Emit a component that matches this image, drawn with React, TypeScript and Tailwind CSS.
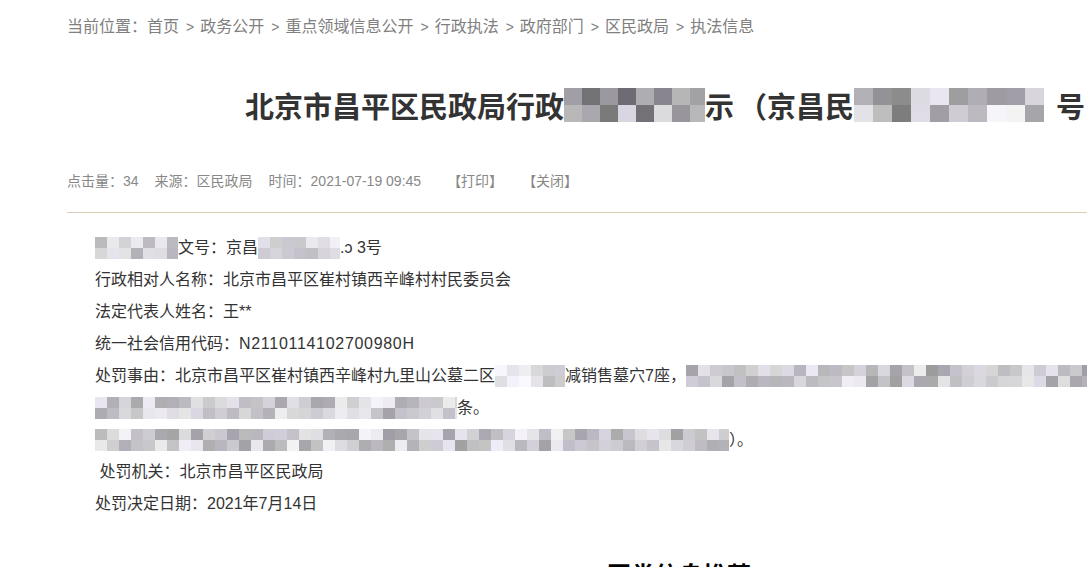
import React from 'react'

const makeRand = (seed: number) => {
  let s = seed
  return () => {
    s = (s * 9301 + 49297) % 233280
    return s / 233280
  }
}

type MosaicProps = {
  w: number
  cell?: number
  rows?: number
  rowH?: number
  seed: number
  min?: number
  max?: number
}

// pixelated block standing in for the redacted text
const Mosaic = ({ w, cell = 12, rows = 2, rowH = 11, seed, min = 160, max = 238 }: MosaicProps) => {
  const rand = makeRand(seed)
  const cols = Math.ceil(w / cell)
  return (
    <span className="inline-flex flex-col align-middle overflow-hidden shrink-0" style={{ width: w }}>
      {Array.from({ length: rows }).map((_, r) => (
        <span key={r} className="flex" style={{ height: rowH }}>
          {Array.from({ length: cols }).map((_, c) => {
            const v = Math.round(min + rand() * (max - min))
            const tint = Math.round(rand() * 8)
            return (
              <span
                key={c}
                className="shrink-0"
                style={{ width: cell, height: rowH, background: `rgb(${v},${v - tint / 2},${v + tint})` }}
              />
            )
          })}
        </span>
      ))}
    </span>
  )
}

const crumbs = ['首页', '政务公开', '重点领域信息公开', '行政执法', '政府部门', '区民政局', '执法信息']

export default function App() {
  return (
    <div className="w-[1087px] h-[567px] overflow-hidden bg-white font-['Liberation_Sans','Noto_Sans_CJK_SC',sans-serif]">
      <div className="w-[1200px] pl-[67px]">
        <div className="mt-[15px] h-[24px] leading-[24px] text-[16px] text-[#808080] flex items-center whitespace-nowrap">
          <span>当前位置：</span>
          {crumbs.map((c, i) => (
            <React.Fragment key={c}>
              {i > 0 && <span className="ml-[7px] mr-[6px] text-[14px]">&gt;</span>}
              <span>{c}</span>
            </React.Fragment>
          ))}
        </div>

        <h1 className="mt-[46px] h-[40px] leading-[40px] pl-[178px] text-[29px] font-bold text-[#333] whitespace-nowrap flex items-center font-['Noto_Sans_CJK_SC',sans-serif]">
          <span>北京市昌平区民政局行政</span>
          <Mosaic w={141} cell={18} rows={2} rowH={17} seed={7} min={100} max={225} />
          <span>示</span>
          <span className="ml-[4px]">（</span>
          <span>京昌民</span>
          <Mosaic w={190} cell={19} rows={2} rowH={17} seed={31} min={120} max={250} />
          <span className="ml-[12px]">号</span>
        </h1>

        <div className="mt-[46px] h-[20px] leading-[20px] text-[14px] text-[#888] flex whitespace-nowrap">
          <span className="mr-[16px]">点击量：34</span>
          <span className="mr-[16px]">来源：区民政局</span>
          <span className="mr-[26px]">时间：2021-07-19 09:45</span>
          <span className="mr-[19px]">【打印】</span>
          <span>【关闭】</span>
        </div>

        <div className="mt-[21px] h-px bg-[#dccfb3]" />

        <div className="mt-[19px] pl-[28px] text-[16px] leading-[32px] text-[#333] whitespace-nowrap">
          <div className="flex items-center">
            <Mosaic w={83} seed={3} />
            <span>文号：京昌</span>
            <Mosaic w={82} seed={11} min={190} max={245} />
            <span>.ↄ 3号</span>
          </div>
          <div>行政相对人名称：北京市昌平区崔村镇西辛峰村村民委员会</div>
          <div>法定代表人姓名：王**</div>
          <div>
            统一社会信用代码：<span className="tracking-[0.7px]">N2110114102700980H</span>
          </div>
          <div className="flex items-center">
            <span>处罚事由：北京市昌平区崔村镇西辛峰村九里山公墓二区</span>
            <Mosaic w={70} seed={19} min={190} max={250} />
            <span>减销售墓穴7座，</span>
            <Mosaic w={410} seed={23} min={155} max={240} />
          </div>
          <div className="flex items-center">
            <Mosaic w={362} seed={41} min={165} max={245} />
            <span>条。</span>
          </div>
          <div className="flex items-center">
            <Mosaic w={634} seed={53} min={160} max={245} />
            <span>）。</span>
          </div>
          <div>&nbsp;处罚机关：北京市昌平区民政局</div>
          <div>处罚决定日期：2021年7月14日</div>
        </div>

        <div className="mt-[38px] pl-[540px] text-[24px] leading-[32px] font-bold text-black font-['Noto_Sans_CJK_SC',sans-serif]">
          同类信息推荐
        </div>
      </div>
    </div>
  )
}
